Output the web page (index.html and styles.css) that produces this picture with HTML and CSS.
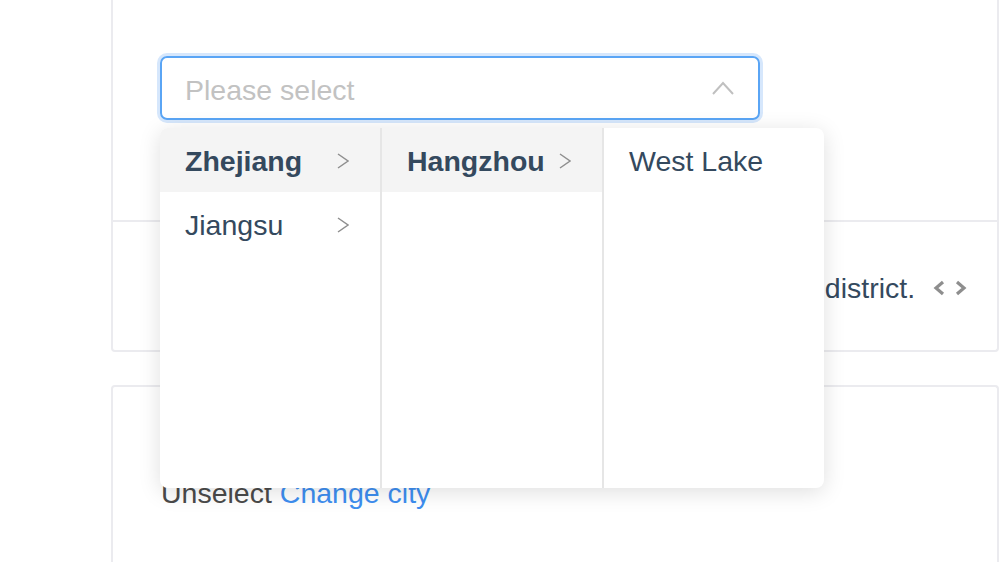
FILE: index.html
```html
<!DOCTYPE html>
<html lang="en">
<head>
<meta charset="utf-8">
<title>Cascader</title>
<link rel="stylesheet" href="styles.css">
</head>
<body>
<div class="page">
  <div class="demo">
    <div class="source">
      <div class="cascader">
        <div class="input is-focus">
          <span class="placeholder">Please select</span>
          <svg class="caret" width="22" height="14" viewBox="0 0 22 14"><polyline points="1,13 11,2 21,13" fill="none" stroke="#c0c0c0" stroke-width="2"/></svg>
        </div>
        <div class="menu">
          <ul class="col">
            <li class="node active"><span>Zhejiang</span><svg class="arrow" width="12" height="16" viewBox="0 0 12 16"><polyline points="1,1 11,8 1,15" fill="none" stroke="#8f8f8f" stroke-width="1.5"/></svg></li>
            <li class="node"><span>Jiangsu</span><svg class="arrow" width="12" height="16" viewBox="0 0 12 16"><polyline points="1,1 11,8 1,15" fill="none" stroke="#8f8f8f" stroke-width="1.5"/></svg></li>
          </ul>
          <ul class="col">
            <li class="node active"><span>Hangzhou</span><svg class="arrow" width="12" height="16" viewBox="0 0 12 16"><polyline points="1,1 11,8 1,15" fill="none" stroke="#8f8f8f" stroke-width="1.5"/></svg></li>
          </ul>
          <ul class="col">
            <li class="node"><span>West Lake</span></li>
          </ul>
        </div>
      </div>
    </div>
    <div class="meta">
      <span class="desc">Hover to expand then select a province, a city and a district.</span>
      <svg class="code-icon" width="34" height="16" viewBox="0 0 34 16"><polyline points="10,2 3,8 10,14" fill="none" stroke="#8e8e8e" stroke-width="3.2"/><polyline points="24,2 31,8 24,14" fill="none" stroke="#8e8e8e" stroke-width="3.2"/></svg>
    </div>
  </div>
  <div class="demo demo-second">
    <div class="source second">
      <p class="line">Unselect <a class="link" href="#">Change city</a></p>
    </div>
  </div>
</div>
</body>
</html>
```

FILE: styles.css
```css
html, body {
  margin: 0;
  padding: 0;
  background: #ffffff;
}
body {
  font-family: "Liberation Sans", Arial, sans-serif;
  font-size: 28.5px;
  color: #34495e;
}
.page {
  padding: 0 7px 0 111px;
}
.demo {
  border: 2px solid #ebebef;
  border-top: 0;
  border-radius: 0 0 4px 4px;
}
.source {
  padding: 56px 0 100px 47px;
}
.cascader {
  position: relative;
  width: 600px;
}
.input {
  box-sizing: border-box;
  height: 64px;
  border: 2px solid #5aa5f5;
  border-radius: 7px;
  box-shadow: 0 0 0 3px #d6e7fc;
  display: flex;
  align-items: center;
  justify-content: space-between;
  padding: 0 24px 0 23px;
}
.placeholder {
  color: #c2c2c2;
  line-height: 55px;
  padding-top: 5px;
}
.caret {
  display: block;
}
.menu {
  position: absolute;
  top: 72px;
  left: 0;
  z-index: 10;
  display: flex;
  height: 360px;
  background: #fff;
  border-radius: 8px;
  overflow: hidden;
  box-shadow: 0 4px 22px rgba(0, 0, 0, 0.13);
}
.col {
  list-style: none;
  margin: 0;
  padding: 0;
  width: 220px;
  border-right: 2px solid #e6e6e6;
}
.col:last-child {
  border-right: 0;
}
.node {
  box-sizing: border-box;
  display: flex;
  align-items: center;
  justify-content: space-between;
  height: 64px;
  line-height: 62px;
  padding: 2px 31px 0 25px;
  color: #34495e;
}
.node.active {
  background: #f4f4f4;
  font-weight: bold;
}
.arrow {
  display: block;
  margin-top: -1px;
}
.meta {
  border-top: 2px solid #ebebef;
  padding: 46px 0 42px 48px;
  display: flex;
  align-items: center;
  line-height: 40px;
  white-space: nowrap;
  overflow: hidden;
}
.code-icon {
  margin-left: 18px;
  flex: none;
}
.demo-second {
  margin-top: 33px;
  border-top: 2px solid #ebebef;
  border-bottom: 0;
  border-radius: 4px 4px 0 0;
  height: 300px;
}
.second {
  padding: 86px 0 0 48px;
}
.line {
  margin: 0;
  line-height: 40px;
  color: #4a4a4a;
}
.link {
  color: #3d8ef0;
  text-decoration: none;
}
```
